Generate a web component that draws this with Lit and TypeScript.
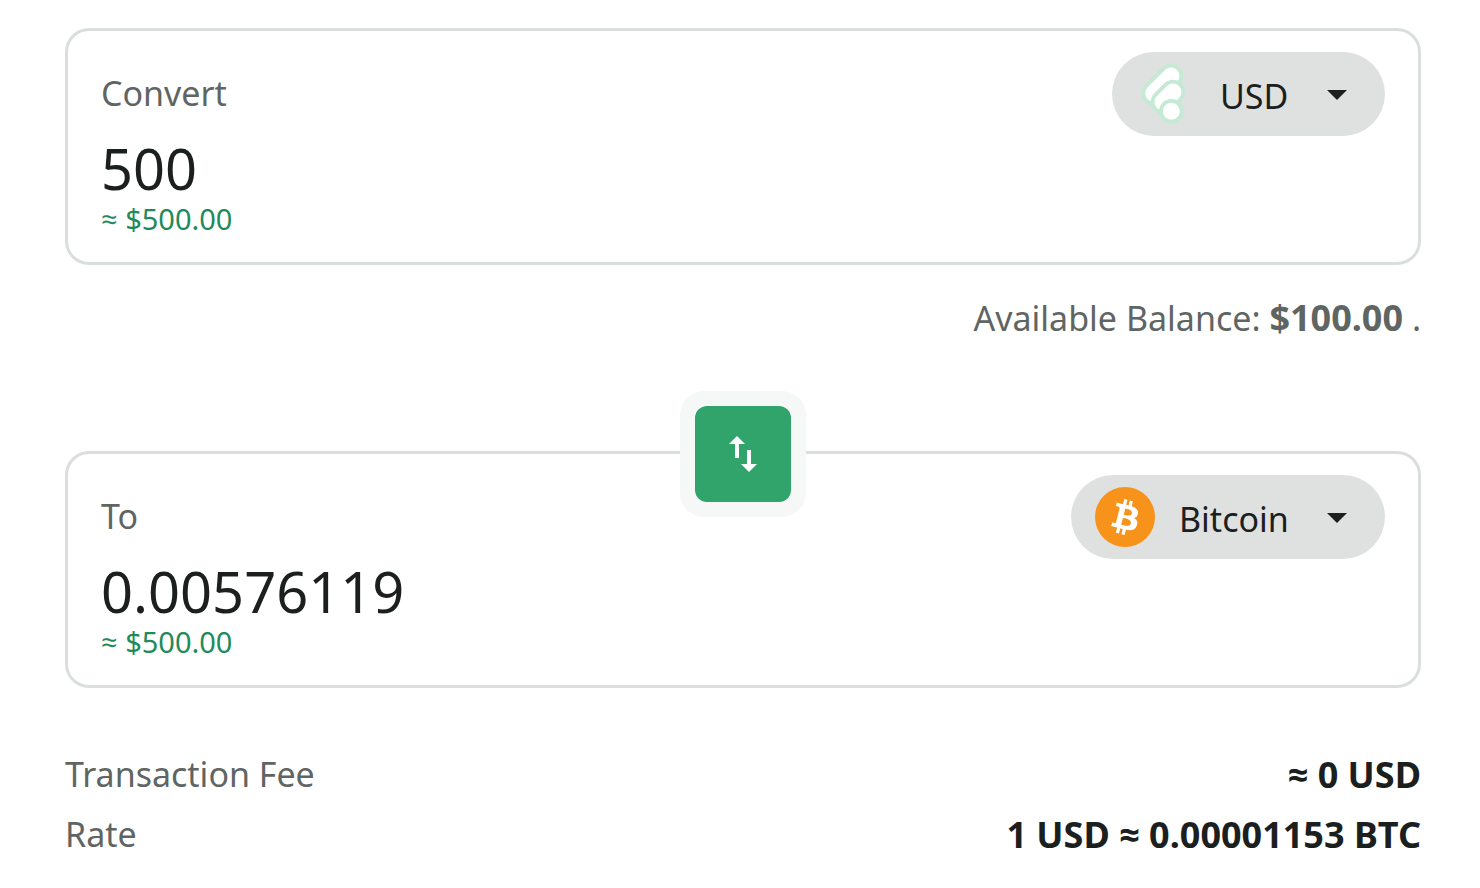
import { LitElement, html, css, svg } from "lit";
import { customElement, property, state } from "lit/decorators.js";

const usdIcon = svg`
  <g fill="none" stroke-linecap="round">
    <path d="M35 12 17.7 29.3" stroke="#c4ead5" stroke-width="24.6" />
    <path d="M35 12 17.7 29.3" stroke="#fff" stroke-width="17" />
    <path d="M37 28 27 38" stroke="#c4ead5" stroke-width="24.6" />
    <path d="M37 28 27 38" stroke="#fff" stroke-width="17" />
  </g>
  <circle cx="35.3" cy="47.3" r="10.4" fill="#fff" stroke="#c4ead5" stroke-width="3.8" />`;

const bitcoinIcon = svg`
  <circle cx="30" cy="30" r="30" fill="#f7931a" />
  <path fill="#fff" transform="translate(30 30) scale(1.8) translate(-16 -16)" d="M23.189 14.02c.314-2.096-1.283-3.223-3.465-3.975l.708-2.84-1.728-.43-.69 2.765c-.454-.114-.92-.22-1.385-.326l.695-2.783L15.596 6l-.708 2.839c-.376-.086-.746-.17-1.104-.26l.002-.009-2.384-.595-.46 1.846s1.283.294 1.256.312c.7.175.826.638.805 1.006l-.806 3.235c.048.012.11.03.18.057l-.183-.045-1.13 4.532c-.086.212-.303.531-.793.41.018.025-1.256-.313-1.256-.313l-.858 1.978 2.25.561c.418.105.828.215 1.231.318l-.715 2.872 1.727.43.708-2.84c.472.127.93.245 1.378.357l-.706 2.828 1.728.43.715-2.866c2.948.558 5.164.333 6.097-2.333.752-2.146-.037-3.385-1.588-4.192 1.13-.26 1.98-1.003 2.207-2.538zm-3.95 5.538c-.533 2.147-4.148.986-5.32.695l.95-3.805c1.172.293 4.929.872 4.37 3.11zm.535-5.569c-.487 1.953-3.495.96-4.47.717l.86-3.45c.975.243 4.118.696 3.61 2.733z" />`;

/** One side of the conversion: a label, an amount, its value and a currency picker. */
@customElement("amount-card")
export class AmountCard extends LitElement {
  @property() label = "";
  @property() amount = "";
  @property() worth = "";
  @property() currency = "";

  static styles = css`
    :host {
      display: block;
    }
    .card {
      display: flex;
      align-items: flex-start;
      gap: 24px;
      padding: 21px 33px 26px;
      border: 3px solid #dadfdd;
      border-radius: 24px;
    }
    .fields {
      flex: 1;
      min-width: 0;
      display: flex;
      flex-direction: column;
      padding-top: 14px;
    }
    .label {
      margin-bottom: 15px;
      font-size: 34px;
      line-height: 54px;
      color: #5f6563;
    }
    .amount {
      width: 100%;
      height: 66px;
      padding: 0;
      border: 0;
      outline: 0;
      background: none;
      font: inherit;
      font-size: 56px;
      line-height: 66px;
      color: #1b201f;
    }
    .worth {
      font-size: 29px;
      line-height: 35px;
      color: #1f8a5a;
    }
    .picker {
      display: grid;
      grid-template-columns: 60px auto 48px;
      column-gap: 24px;
      align-items: center;
      height: 84px;
      padding: 0 24px;
      border-radius: 42px;
      background: #dfe1e0;
    }
    .coin,
    .select,
    .caret {
      grid-row: 1;
    }
    .coin {
      width: 60px;
      height: 60px;
    }
    .select {
      grid-column: 2 / 4;
      height: 84px;
      margin: 0;
      padding: 3px 72px 0 0;
      border: 0;
      outline: 0;
      appearance: none;
      background: none;
      font: inherit;
      font-size: 34px;
      color: #1b201f;
      cursor: pointer;
    }
    .caret {
      grid-column: 3;
      width: 48px;
      height: 48px;
      fill: #1b201f;
      pointer-events: none;
    }
  `;

  render() {
    return html`
      <div class="card">
        <div class="fields">
          <label class="label" for="amount">${this.label}</label>
          <input
            class="amount"
            id="amount"
            type="text"
            inputmode="decimal"
            .value=${this.amount}
          />
          <div class="worth">≈ ${this.worth}</div>
        </div>
        <div class="picker">
          <svg class="coin" viewBox="0 0 60 60" aria-hidden="true">
            ${this.currency === "USD" ? usdIcon : bitcoinIcon}
          </svg>
          <select class="select" aria-label="Currency">
            <option>${this.currency}</option>
          </select>
          <svg class="caret" viewBox="0 0 24 24" aria-hidden="true">
            <path d="m7 10 5 5 5-5z" />
          </svg>
        </div>
      </div>
    `;
  }
}

@customElement("app-root")
export class AppRoot extends LitElement {
  @state() private from = { currency: "USD", amount: "500" };
  @state() private to = { currency: "Bitcoin", amount: "0.00576119" };

  static styles = css`
    :host {
      display: block;
      padding: 28px 59px 0 65px;
      background: #fff;
      font-family: "Noto Sans", "Open Sans", sans-serif;
      font-size: 34px;
      color: #1b201f;
    }
    .balance {
      margin: 26px 0 106px;
      line-height: 54px;
      text-align: right;
      color: #5f6563;
    }
    .balance-value {
      font-size: 36px;
      line-height: 1;
    }
    .target {
      position: relative;
    }
    .swap-frame {
      position: absolute;
      top: 3px;
      left: 50%;
      transform: translate(-50%, -50%);
      border: 15px solid #f6f8f7;
      border-radius: 24px;
      background: #fff;
    }
    .swap {
      display: grid;
      place-items: center;
      width: 96px;
      height: 96px;
      padding: 0;
      border: 0;
      border-radius: 12px;
      background: #31a46c;
      cursor: pointer;
    }
    .swap-icon {
      width: 48px;
      height: 48px;
      fill: #fff;
    }
    .details {
      margin: 56px 0 0;
    }
    .row {
      display: flex;
      align-items: center;
      justify-content: space-between;
      height: 60px;
    }
    .term {
      color: #5f6563;
    }
    .value {
      margin: 0;
      font-size: 36px;
      font-weight: 700;
    }
  `;

  private swap() {
    [this.from, this.to] = [this.to, this.from];
  }

  render() {
    return html`
      <amount-card
        label="Convert"
        worth="$500.00"
        .amount=${this.from.amount}
        .currency=${this.from.currency}
      ></amount-card>
      <p class="balance">
        Available Balance: <strong class="balance-value">$100.00</strong> .
      </p>
      <div class="target">
        <amount-card
          label="To"
          worth="$500.00"
          .amount=${this.to.amount}
          .currency=${this.to.currency}
        ></amount-card>
        <div class="swap-frame">
          <button class="swap" type="button" aria-label="Swap currencies" @click=${this.swap}>
            <svg class="swap-icon" viewBox="0 0 24 24" aria-hidden="true">
              <path d="M16 17.01V10h-2v7.01h-3L15 21l4-3.99h-3zM9 3 5 6.99h3V14h2V6.99h3L9 3z" />
            </svg>
          </button>
        </div>
      </div>
      <dl class="details">
        <div class="row">
          <dt class="term">Transaction Fee</dt>
          <dd class="value">≈ 0 USD</dd>
        </div>
        <div class="row">
          <dt class="term">Rate</dt>
          <dd class="value">1 USD ≈ 0.00001153 BTC</dd>
        </div>
      </dl>
    `;
  }
}
